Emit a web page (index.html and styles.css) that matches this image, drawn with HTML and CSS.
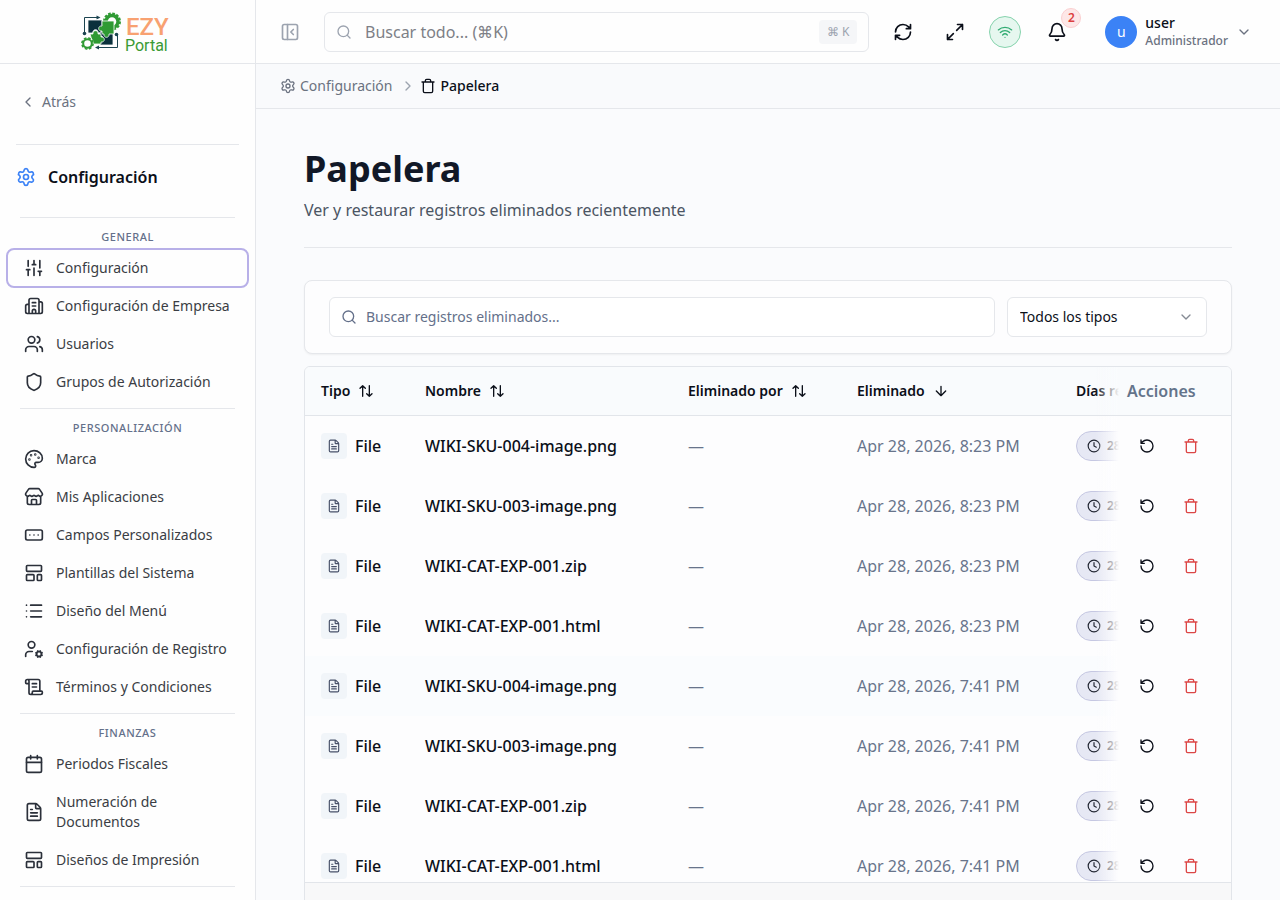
FILE: index.html
```html
<!DOCTYPE html>
<html lang="es">
<head>
    <meta charset="utf-8">
    <meta name="viewport" content="width=device-width, initial-scale=1.0">
    <title>Papelera - EZY Portal</title>

    <link rel="stylesheet" href="styles.css">
</head>
<body>

<!-- Icon sprite -->
<svg class="sprite" aria-hidden="true">
    <symbol id="i-settings" viewBox="0 0 24 24"><path d="M9.671 4.136a2.34 2.34 0 0 1 4.659 0 2.34 2.34 0 0 0 3.319 1.915 2.34 2.34 0 0 1 2.33 4.033 2.34 2.34 0 0 0 0 3.831 2.34 2.34 0 0 1-2.33 4.033 2.34 2.34 0 0 0-3.319 1.915 2.34 2.34 0 0 1-4.659 0 2.34 2.34 0 0 0-3.32-1.915 2.34 2.34 0 0 1-2.33-4.033 2.34 2.34 0 0 0 0-3.831A2.34 2.34 0 0 1 6.35 6.051a2.34 2.34 0 0 0 3.319-1.915"/><circle cx="12" cy="12" r="3"/></symbol>
    <symbol id="i-sliders" viewBox="0 0 24 24"><path d="M10 8h4M12 21v-9M12 8V3M17 16h4M19 12V3M19 21v-5M3 14h4M5 10V3M5 21v-7"/></symbol>
    <symbol id="i-building" viewBox="0 0 24 24"><path d="M10 12h4M10 8h4M14 21v-3a2 2 0 0 0-4 0v3M6 10H4a2 2 0 0 0-2 2v7a2 2 0 0 0 2 2h16a2 2 0 0 0 2-2V9a2 2 0 0 0-2-2h-2M6 21V5a2 2 0 0 1 2-2h8a2 2 0 0 1 2 2v16"/></symbol>
    <symbol id="i-users" viewBox="0 0 24 24"><path d="M16 21v-2a4 4 0 0 0-4-4H6a4 4 0 0 0-4 4v2M16 3.128a4 4 0 0 1 0 7.744M22 21v-2a4 4 0 0 0-3-3.87"/><circle cx="9" cy="7" r="4"/></symbol>
    <symbol id="i-shield" viewBox="0 0 24 24"><path d="M20 13c0 5-3.5 7.5-7.66 8.95a1 1 0 0 1-.67-.01C7.5 20.5 4 18 4 13V6a1 1 0 0 1 1-1c2 0 4.5-1.2 6.24-2.72a1.17 1.17 0 0 1 1.52 0C14.51 3.81 17 5 19 5a1 1 0 0 1 1 1z"/></symbol>
    <symbol id="i-palette" viewBox="0 0 24 24"><path d="M12 22a1 1 0 0 1 0-20 10 9 0 0 1 10 9 5 5 0 0 1-5 5h-2.25a1.75 1.75 0 0 0-1.4 2.8l.3.4a1.75 1.75 0 0 1-1.4 2.8z"/><circle cx="13.5" cy="6.5" r=".5"/><circle cx="17.5" cy="10.5" r=".5"/><circle cx="6.5" cy="12.5" r=".5"/><circle cx="8.5" cy="7.5" r=".5"/></symbol>
    <symbol id="i-store" viewBox="0 0 24 24"><path d="M15 21v-5a1 1 0 0 0-1-1h-4a1 1 0 0 0-1 1v5M17.774 10.31a1.12 1.12 0 0 0-1.549 0 2.5 2.5 0 0 1-3.451 0 1.12 1.12 0 0 0-1.548 0 2.5 2.5 0 0 1-3.452 0 1.12 1.12 0 0 0-1.549 0 2.5 2.5 0 0 1-3.77-3.248l2.889-4.184A2 2 0 0 1 7 2h10a2 2 0 0 1 1.653.873l2.895 4.192a2.5 2.5 0 0 1-3.774 3.244M4 10.95V19a2 2 0 0 0 2 2h12a2 2 0 0 0 2-2v-8.05"/></symbol>
    <symbol id="i-fields" viewBox="0 0 24 24"><rect x="2" y="6" width="20" height="12" rx="2"/><path d="M12 12h.01M17 12h.01M7 12h.01"/></symbol>
    <symbol id="i-template" viewBox="0 0 24 24"><rect x="3" y="3" width="18" height="7" rx="1"/><rect x="3" y="14" width="9" height="7" rx="1"/><rect x="16" y="14" width="5" height="7" rx="1"/></symbol>
    <symbol id="i-list" viewBox="0 0 24 24"><path d="M3 5h.01M3 12h.01M3 19h.01M8 5h13M8 12h13M8 19h13"/></symbol>
    <symbol id="i-user-cog" viewBox="0 0 24 24"><path d="M10 15H6a4 4 0 0 0-4 4v2M14.305 16.53l.923.382M15.228 19.148l-.923.383M16.852 15.228l-.383-.923M16.852 20.772l-.383.924M19.148 15.228l.383-.923M19.53 21.696l-.382-.924M20.772 16.852l.924-.383M20.772 19.148l.924.383"/><circle cx="18" cy="18" r="3"/><circle cx="9" cy="7" r="4"/></symbol>
    <symbol id="i-scroll" viewBox="0 0 24 24"><path d="M15 12h-5M15 8h-5M19 17V5a2 2 0 0 0-2-2H4M8 21h12a2 2 0 0 0 2-2v-1a1 1 0 0 0-1-1H11a1 1 0 0 0-1 1v1a2 2 0 1 1-4 0V5a2 2 0 1 0-4 0v2a1 1 0 0 0 1 1h3"/></symbol>
    <symbol id="i-calendar" viewBox="0 0 24 24"><path d="M8 2v4M16 2v4M3 10h18"/><rect x="3" y="4" width="18" height="18" rx="2"/></symbol>
    <symbol id="i-file" viewBox="0 0 24 24"><path d="M6 22a2 2 0 0 1-2-2V4a2 2 0 0 1 2-2h8a2.4 2.4 0 0 1 1.704.706l3.588 3.588A2.4 2.4 0 0 1 20 8v12a2 2 0 0 1-2 2zM14 2v5a1 1 0 0 0 1 1h5M10 9H8M16 13H8M16 17H8"/></symbol>
    <symbol id="i-panel" viewBox="0 0 24 24"><rect x="3" y="3" width="18" height="18" rx="2"/><path d="M9 3v18M16 15l-3-3 3-3"/></symbol>
    <symbol id="i-search" viewBox="0 0 24 24"><path d="m21 21-4.34-4.34"/><circle cx="11" cy="11" r="8"/></symbol>
    <symbol id="i-refresh" viewBox="0 0 24 24"><path d="M3 12a9 9 0 0 1 9-9 9.75 9.75 0 0 1 6.74 2.74L21 8M21 3v5h-5M21 12a9 9 0 0 1-9 9 9.75 9.75 0 0 1-6.74-2.74L3 16M8 16H3v5"/></symbol>
    <symbol id="i-expand" viewBox="0 0 24 24"><path d="M15 3h6v6M21 3l-7 7M3 21l7-7M9 21H3v-6"/></symbol>
    <symbol id="i-wifi" viewBox="0 0 24 24"><path d="M12 20h.01M2 8.82a15 15 0 0 1 20 0M5 12.859a10 10 0 0 1 14 0M8.5 16.429a5 5 0 0 1 7 0"/></symbol>
    <symbol id="i-bell" viewBox="0 0 24 24"><path d="M10.268 21a2 2 0 0 0 3.464 0M3.262 15.326A1 1 0 0 0 4 17h16a1 1 0 0 0 .74-1.673C19.41 13.956 18 12.499 18 8A6 6 0 0 0 6 8c0 4.499-1.411 5.956-2.738 7.326"/></symbol>
    <symbol id="i-trash" viewBox="0 0 24 24"><path d="M19 6v14a2 2 0 0 1-2 2H7a2 2 0 0 1-2-2V6M3 6h18M8 6V4a2 2 0 0 1 2-2h4a2 2 0 0 1 2 2v2"/></symbol>
    <symbol id="i-left" viewBox="0 0 24 24"><path d="m15 18-6-6 6-6"/></symbol>
    <symbol id="i-right" viewBox="0 0 24 24"><path d="m9 18 6-6-6-6"/></symbol>
    <symbol id="i-down" viewBox="0 0 24 24"><path d="m6 9 6 6 6-6"/></symbol>
    <symbol id="i-sort" viewBox="0 0 24 24"><path d="m21 16-4 4-4-4M17 20V4M3 8l4-4 4 4M7 4v16"/></symbol>
    <symbol id="i-arrow-down" viewBox="0 0 24 24"><path d="M12 5v14M19 12l-7 7-7-7"/></symbol>
    <symbol id="i-restore" viewBox="0 0 24 24"><path d="M3 12a9 9 0 1 0 9-9 9.75 9.75 0 0 0-6.74 2.74L3 8M3 3v5h5"/></symbol>
    <symbol id="i-clock" viewBox="0 0 24 24"><circle cx="12" cy="12" r="10"/><path d="M12 6v6l4 2"/></symbol>
</svg>

<!-- Sidebar -->
<aside class="sidebar">
    <a class="logo" href="#" aria-label="EZY Portal">
        <svg width="92" height="44" viewBox="0 0 92 44">
            <!-- Connector lines -->
            <path fill="none" stroke="#1c4450" d="M5.500 22V7.500H18M38.500 25v12.500H19"/>
            <path fill="#1c4450" d="M17.500 5.500l4 2-4 2zM20 35.500l-4 2 4 2z"/>
            <circle cx="5.500" cy="23.500" r="1.800" fill="#1c4450"/>
            <circle cx="37.500" cy="24.500" r="1.800" fill="#1c4450"/>
            <!-- Large gear -->
            <circle cx="33" cy="11.500" r="6" fill="none" stroke="#2f9a33" stroke-width="3.400"/>
            <circle cx="33" cy="11.500" r="8" fill="none" stroke="#2f9a33" stroke-width="2" stroke-dasharray="2.700 1.488"/>
            <!-- Puzzle pieces -->
            <g stroke="#fefefe" stroke-width=".8">
                <path fill="#0a303c" d="M9 10h14v5a2.600 2.600 0 1 1 0 5v3h-4a2.600 2.600 0 1 0-5 0H9z"/>
                <path fill="#0a303c" d="M21 22h13v13H21v-4a2.600 2.600 0 1 0 0-5z"/>
                <path fill="#2f9a33" d="M23 11h12v13h-5a2.600 2.600 0 1 1-5 0h-2v-3a2.600 2.600 0 1 1 0-5z"/>
                <path fill="#2f9a33" d="M11 24h3a2.600 2.600 0 1 1 5 0h3v3a2.600 2.600 0 1 1 0 5v2h-8z"/>
            </g>
            <!-- Small gear -->
            <circle cx="8.500" cy="33.500" r="6.400" fill="#fefefe"/>
            <circle cx="8.500" cy="33.500" r="4.300" fill="none" stroke="#2f9a33" stroke-width="2"/>
            <circle cx="8.500" cy="33.500" r="5.600" fill="none" stroke="#2f9a33" stroke-width="1.600" stroke-dasharray="2.600 1.800"/>
            <text class="logo-ezy" x="47" y="25">EZY</text>
            <text class="logo-portal" x="46" y="41">Portal</text>
        </svg>
    </a>

    <div class="sidebar-top">
        <a class="back" href="#"><svg class="icon s16"><use href="#i-left"/></svg>Atrás</a>
    </div>

    <h2 class="sidebar-title"><svg class="icon s20"><use href="#i-settings"/></svg>Configuración</h2>

    <nav class="sidebar-nav" aria-label="Configuración">
        <section>
            <h3>General</h3>
            <a class="active" href="#"><svg class="icon s20"><use href="#i-sliders"/></svg>Configuración</a>
            <a href="#"><svg class="icon s20"><use href="#i-building"/></svg>Configuración de Empresa</a>
            <a href="#"><svg class="icon s20"><use href="#i-users"/></svg>Usuarios</a>
            <a href="#"><svg class="icon s20"><use href="#i-shield"/></svg>Grupos de Autorización</a>
        </section>
        <section>
            <h3>Personalización</h3>
            <a href="#"><svg class="icon s20"><use href="#i-palette"/></svg>Marca</a>
            <a href="#"><svg class="icon s20"><use href="#i-store"/></svg>Mis Aplicaciones</a>
            <a href="#"><svg class="icon s20"><use href="#i-fields"/></svg>Campos Personalizados</a>
            <a href="#"><svg class="icon s20"><use href="#i-template"/></svg>Plantillas del Sistema</a>
            <a href="#"><svg class="icon s20"><use href="#i-list"/></svg>Diseño del Menú</a>
            <a href="#"><svg class="icon s20"><use href="#i-user-cog"/></svg>Configuración de Registro</a>
            <a href="#"><svg class="icon s20"><use href="#i-scroll"/></svg>Términos y Condiciones</a>
        </section>
        <section>
            <h3>Finanzas</h3>
            <a href="#"><svg class="icon s20"><use href="#i-calendar"/></svg>Periodos Fiscales</a>
            <a href="#"><svg class="icon s20"><use href="#i-file"/></svg>Numeración de Documentos</a>
            <a href="#"><svg class="icon s20"><use href="#i-template"/></svg>Diseños de Impresión</a>
        </section>
        <section></section>
    </nav>
</aside>

<div class="page">
    <!-- Top bar -->
    <header class="topbar">
        <button class="icon-btn muted" type="button" aria-label="Contraer menú"><svg class="icon s20"><use href="#i-panel"/></svg></button>
        <label class="search">
            <svg class="icon s16"><use href="#i-search"/></svg>
            <input type="text" placeholder="Buscar todo... (⌘K)" aria-label="Buscar todo">
            <kbd>⌘ K</kbd>
        </label>
        <button class="icon-btn" type="button" aria-label="Actualizar"><svg class="icon s20"><use href="#i-refresh"/></svg></button>
        <button class="icon-btn" type="button" aria-label="Pantalla completa"><svg class="icon s20"><use href="#i-expand"/></svg></button>
        <button class="wifi" type="button" aria-label="Conectado"><svg class="icon s16"><use href="#i-wifi"/></svg></button>
        <button class="bell" type="button" aria-label="Notificaciones"><svg class="icon s20"><use href="#i-bell"/></svg><span class="badge">2</span></button>
        <button class="user" type="button">
            <span class="avatar">u</span>
            <span class="user-text"><span class="user-name">user</span><span class="user-role">Administrador</span></span>
            <svg class="icon s16"><use href="#i-down"/></svg>
        </button>
    </header>

    <!-- Breadcrumb -->
    <nav class="breadcrumb" aria-label="Ruta">
        <a href="#"><svg class="icon s16"><use href="#i-settings"/></svg>Configuración</a>
        <svg class="icon s16"><use href="#i-right"/></svg>
        <span class="current"><svg class="icon s16"><use href="#i-trash"/></svg>Papelera</span>
    </nav>

    <main>
        <div class="page-header">
            <h1>Papelera</h1>
            <p>Ver y restaurar registros eliminados recientemente</p>
        </div>

        <!-- Filters -->
        <div class="filters">
            <label class="filter-search">
                <svg class="icon s16"><use href="#i-search"/></svg>
                <input type="text" placeholder="Buscar registros eliminados..." aria-label="Buscar registros eliminados">
            </label>
            <div class="filter-type">
                <select aria-label="Tipo de registro">
                    <option>Todos los tipos</option>
                    <option>File</option>
                </select>
                <svg class="icon s16"><use href="#i-down"/></svg>
            </div>
        </div>

        <!-- Deleted records -->
        <div class="table-card">
            <div class="table-scroll">
                <table>
                    <colgroup>
                        <col class="col-type">
                        <col class="col-name">
                        <col class="col-by">
                        <col class="col-date">
                        <col class="col-days">
                        <col class="col-actions">
                    </colgroup>
                    <thead>
                        <tr>
                            <th><button type="button">Tipo <svg class="icon s16"><use href="#i-sort"/></svg></button></th>
                            <th><button type="button">Nombre <svg class="icon s16"><use href="#i-sort"/></svg></button></th>
                            <th><button type="button">Eliminado por <svg class="icon s16"><use href="#i-sort"/></svg></button></th>
                            <th><button type="button">Eliminado <svg class="icon s16"><use href="#i-arrow-down"/></svg></button></th>
                            <th><button type="button">Días restantes</button></th>
                            <th class="actions">Acciones</th>
                        </tr>
                    </thead>
                    <tbody id="records"></tbody>
                </table>
            </div>
            <div class="table-footer"></div>
        </div>
    </main>
</div>

<script src="script.js"></script>
</body>
</html>
```
FILE: styles.css
```css
* {
    box-sizing: border-box;
}

body {
    margin: 0;
    display: flex;
    height: 100vh;
    overflow: hidden;
    background: #fafbfd;
    color: #0b0f19;
    font-family: "Noto Sans", sans-serif;
    font-size: 14px;
    line-height: 20px;
}

h1, h2, h3, p {
    margin: 0;
}

a {
    color: inherit;
    text-decoration: none;
}

button, input, select {
    font: inherit;
    color: inherit;
}

button {
    padding: 0;
    border: none;
    background: none;
    cursor: pointer;
}

/* Icons */
.sprite {
    position: absolute;
    width: 0;
    height: 0;
}

.icon {
    flex: none;
    fill: none;
    stroke: currentColor;
    stroke-width: 2;
    stroke-linecap: round;
    stroke-linejoin: round;
}

.s14 {
    width: 14px;
    height: 14px;
}

.s16 {
    width: 16px;
    height: 16px;
}

.s20 {
    width: 20px;
    height: 20px;
}

/* Sidebar */
.sidebar {
    flex: none;
    width: 256px;
    overflow: hidden;
    background: #fefefe;
    border-right: 1px solid #e5e7eb;
}

.logo {
    display: flex;
    justify-content: center;
    align-items: center;
    height: 64px;
    padding-right: 5px;
    border-bottom: 1px solid #e5e7eb;
}

.logo-ezy {
    font: 500 24px Roboto, sans-serif;
    fill: #f8a171;
}

.logo-portal {
    font: 400 16px Roboto, sans-serif;
    fill: #3a9a35;
}

.sidebar-top {
    margin: 0 16px;
    padding: 28px 4px 32px;
    border-bottom: 1px solid #e5e7eb;
}

.back {
    display: flex;
    align-items: center;
    gap: 6px;
    color: #6b7280;
}

.sidebar-title {
    display: flex;
    align-items: center;
    gap: 12px;
    padding: 20px 16px 28px;
    font-size: 16px;
    font-weight: 600;
    line-height: 24px;
}

.sidebar-title .icon {
    color: #3b82f6;
}

.sidebar-nav section {
    display: flex;
    flex-direction: column;
    gap: 2px;
    padding: 0 8px 8px;
}

.sidebar-nav section::before {
    content: "";
    height: 1px;
    margin: 0 12px;
    background: #e5e7eb;
}

.sidebar-nav h3 {
    padding: 9px 0 3px;
    text-align: center;
    text-transform: uppercase;
    color: #64708a;
    font-size: 11px;
    font-weight: 500;
    line-height: 16px;
    letter-spacing: 0.05em;
}

.sidebar-nav a {
    display: flex;
    align-items: center;
    gap: 12px;
    padding: 8px 16px;
    border-radius: 6px;
    color: #3a3d44;
}

.sidebar-nav a .icon {
    color: #2b303a;
}

.sidebar-nav a.active {
    outline: 2px solid #b8b0e8;
}

/* Top bar */
.page {
    flex: 1;
    min-width: 0;
    display: flex;
    flex-direction: column;
}

.topbar {
    display: flex;
    align-items: center;
    gap: 16px;
    flex: none;
    height: 64px;
    padding: 0 16px;
    background: #fefefe;
    border-bottom: 1px solid #e5e7eb;
}

.icon-btn {
    display: flex;
    justify-content: center;
    align-items: center;
    width: 36px;
    height: 36px;
}

.muted {
    color: #9ca3af;
}

.search {
    flex: 1;
    min-width: 0;
    display: flex;
    align-items: center;
    gap: 13px;
    height: 40px;
    padding: 0 11px;
    border: 1px solid #e5e7eb;
    border-radius: 6px;
    color: #9ca3af;
}

.search input {
    flex: 1;
    min-width: 0;
    padding: 0;
    border: none;
    outline: none;
    background: none;
    color: #111827;
    font-size: 16px;
}

.search input::placeholder {
    color: #7d8086;
}

kbd {
    padding: 0 8px;
    border-radius: 4px;
    background: #f5f6f8;
    font-family: inherit;
    font-size: 12px;
    line-height: 24px;
}

.wifi {
    display: flex;
    justify-content: center;
    align-items: center;
    width: 32px;
    height: 32px;
    border: 1px solid #86d3ad;
    border-radius: 50%;
    background: #e6f7ef;
    color: #32ac73;
}

.bell {
    position: relative;
    display: flex;
    justify-content: center;
    align-items: center;
    width: 40px;
    height: 40px;
}

.badge {
    position: absolute;
    top: -4px;
    right: -4px;
    width: 20px;
    height: 20px;
    border: 1px solid #fbcfd0;
    border-radius: 50%;
    background: #fde7e7;
    color: #dc3f3f;
    font-size: 12px;
    font-weight: 600;
    line-height: 18px;
    text-align: center;
}

.user {
    display: flex;
    align-items: center;
    gap: 8px;
    padding: 0 12px;
}

.user .icon {
    color: #6b7280;
}

.avatar {
    width: 32px;
    height: 32px;
    border-radius: 50%;
    background: #3b82f6;
    color: #fff;
    line-height: 32px;
    text-align: center;
}

.user-text {
    display: flex;
    flex-direction: column;
    text-align: left;
}

.user-name {
    font-weight: 500;
    line-height: 18px;
}

.user-role {
    color: #6b7280;
    font-size: 12px;
    font-weight: 500;
    line-height: 18px;
}

/* Breadcrumb */
.breadcrumb {
    display: flex;
    align-items: center;
    gap: 8px;
    flex: none;
    padding: 12px 24px;
    border-bottom: 1px solid #e5e7eb;
    background: #f9fafc;
    color: #6b7280;
}

.breadcrumb a,
.breadcrumb .current {
    display: flex;
    align-items: center;
    gap: 4px;
}

.breadcrumb > .icon {
    color: #9ca3af;
}

.breadcrumb .current {
    margin-left: -4px;
    color: #0b0f19;
    font-weight: 500;
}

/* Main */
main {
    flex: 1;
    min-height: 0;
    overflow-y: auto;
    scrollbar-width: none;
    padding: 40px 48px;
}

.page-header {
    padding-bottom: 24px;
    margin-bottom: 32px;
    border-bottom: 1px solid #e5e7eb;
}

.page-header h1 {
    margin-bottom: 8px;
    color: #111827;
    font-size: 36px;
    font-weight: 700;
    line-height: 40px;
}

.page-header p {
    color: #4b5563;
    font-size: 16px;
    line-height: 26px;
}

/* Filters */
.filters {
    display: flex;
    gap: 12px;
    margin-bottom: 12px;
    padding: 16px 24px;
    border: 1px solid #e5e7eb;
    border-radius: 8px;
    background: #fdfdfe;
    box-shadow: 0 1px 2px rgba(0, 0, 0, 0.05);
}

.filter-search {
    flex: 1;
    display: flex;
    align-items: center;
    gap: 9px;
    height: 40px;
    padding: 0 11px;
    border: 1px solid #e5e7eb;
    border-radius: 6px;
    background: #fff;
    color: #64708a;
}

.filter-search input {
    flex: 1;
    min-width: 0;
    padding: 0;
    border: none;
    outline: none;
    background: none;
}

.filter-search input::placeholder {
    color: #64708a;
}

.filter-type {
    position: relative;
    width: 200px;
}

.filter-type select {
    width: 100%;
    height: 40px;
    padding: 0 12px;
    border: 1px solid #e5e7eb;
    border-radius: 6px;
    background: #fff;
    appearance: none;
}

.filter-type .icon {
    position: absolute;
    top: 12px;
    right: 13px;
    color: #858a94;
    pointer-events: none;
}

/* Table */
.table-card {
    overflow: hidden;
    border: 1px solid #e2e5ea;
    border-radius: 6px;
    background: #fdfdfe;
}

.table-scroll {
    max-height: calc(100vh - 385px);
    overflow: auto;
    scrollbar-width: none;
}

table {
    width: 100%;
    min-width: 1036px;
    table-layout: fixed;
    border-spacing: 0;
    font-size: 16px;
    line-height: 24px;
}

.col-type {
    width: 104px;
}

.col-name {
    width: 263px;
}

.col-by {
    width: 169px;
}

.col-date {
    width: 219px;
}

.col-days {
    width: 169px;
}

.col-actions {
    width: 112px;
}

th, td {
    padding: 0 16px;
    text-align: left;
    white-space: nowrap;
}

th {
    position: sticky;
    top: 0;
    z-index: 2;
    height: 49px;
    background: #f9fbfd;
    border-bottom: 1px solid #e2e5ea;
}

th button {
    display: flex;
    align-items: center;
    gap: 8px;
    font-size: 14px;
    font-weight: 600;
}

td {
    height: 60px;
}

tr.highlight td {
    background: #fafcfe;
}

.type {
    display: flex;
    align-items: center;
    gap: 8px;
    font-weight: 500;
}

.type-icon {
    display: flex;
    padding: 6px;
    border-radius: 4px;
    background: #f1f5f9;
    color: #475069;
}

.name {
    font-weight: 500;
}

.soft {
    color: #68748b;
}

.days {
    display: inline-flex;
    align-items: center;
    gap: 6px;
    height: 30px;
    padding: 0 10px;
    border: 1px solid #c5c7e2;
    border-radius: 15px;
    background: #e6e8f4;
    color: #1f2430;
    font-size: 12px;
    font-weight: 600;
    vertical-align: middle;
}

/* Actions column stays pinned to the right edge */
th.actions,
td.actions,
tr.highlight td.actions {
    position: sticky;
    right: 0;
    z-index: 1;
    padding: 0 8px;
    background: #fdfdfe;
}

th.actions {
    z-index: 3;
    background: #f9fbfd;
    color: #64748b;
    font-weight: 600;
}

.actions::before {
    content: "";
    position: absolute;
    top: 0;
    bottom: 0;
    right: 100%;
    width: 24px;
    background: linear-gradient(to right, transparent, #fdfdfe);
}

th.actions::before {
    background: linear-gradient(to right, transparent, #f9fbfd);
}

.action-list {
    display: flex;
    gap: 4px;
}

.action-list button {
    display: flex;
    justify-content: center;
    align-items: center;
    width: 40px;
    height: 40px;
}

.action-list .delete {
    color: #dc4646;
}

.table-footer {
    height: 56px;
    border-top: 1px solid #e2e5ea;
    background: #f8f8f9;
}
```
FILE: script.js
```js
const records = [
    { name: "WIKI-SKU-004-image.png", date: "Apr 28, 2026, 8:23 PM" },
    { name: "WIKI-SKU-003-image.png", date: "Apr 28, 2026, 8:23 PM" },
    { name: "WIKI-CAT-EXP-001.zip", date: "Apr 28, 2026, 8:23 PM" },
    { name: "WIKI-CAT-EXP-001.html", date: "Apr 28, 2026, 8:23 PM" },
    { name: "WIKI-SKU-004-image.png", date: "Apr 28, 2026, 7:41 PM", highlight: true },
    { name: "WIKI-SKU-003-image.png", date: "Apr 28, 2026, 7:41 PM" },
    { name: "WIKI-CAT-EXP-001.zip", date: "Apr 28, 2026, 7:41 PM" },
    { name: "WIKI-CAT-EXP-001.html", date: "Apr 28, 2026, 7:41 PM" }
];

const icon = (name, size = 16) => `<svg class="icon s${size}"><use href="#i-${name}"/></svg>`;

document.getElementById("records").innerHTML = records.map((record) => `
    <tr class="${record.highlight ? "highlight" : ""}">
        <td><div class="type"><span class="type-icon">${icon("file", 14)}</span>File</div></td>
        <td class="name">${record.name}</td>
        <td class="soft">—</td>
        <td class="soft">${record.date}</td>
        <td><span class="days">${icon("clock", 14)}28 días</span></td>
        <td class="actions">
            <div class="action-list">
                <button type="button" aria-label="Restaurar">${icon("restore")}</button>
                <button type="button" class="delete" aria-label="Eliminar">${icon("trash")}</button>
            </div>
        </td>
    </tr>`).join("");
```
